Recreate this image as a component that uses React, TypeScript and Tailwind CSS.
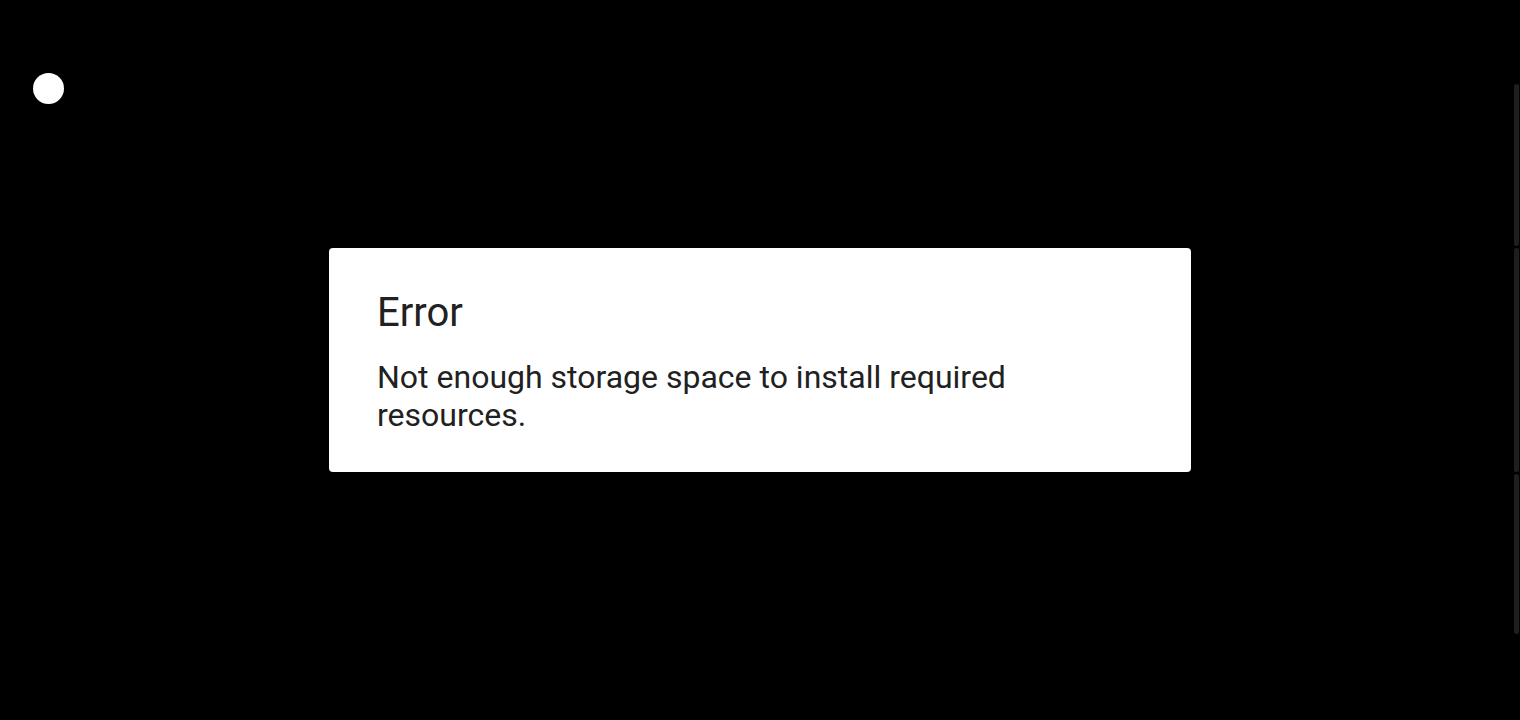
import React from "react";

const ScrollSegments: React.FC = () => (
  <div className="absolute right-px top-[84px] flex flex-col gap-[2px]">
    <div className="w-[5px] h-[162px] rounded-full bg-[#1e1e1e]" />
    <div className="w-[5px] h-[224px] rounded-full bg-[#1e1e1e]" />
    <div className="w-[5px] h-[160px] rounded-full bg-[#1e1e1e]" />
  </div>
);

const App: React.FC = () => {
  return (
    <div className="relative w-full h-[720px] bg-black overflow-hidden flex items-center justify-center font-['Roboto',sans-serif]">
      <div className="absolute left-[33px] top-[73px] size-[31px] rounded-full bg-white" />
      <ScrollSegments />

      <div className="w-[862px] h-[224px] bg-white rounded-[4px] px-12 pt-[41px] text-[#212121]">
        <h2 className="text-[40px] leading-[48px]">Error</h2>
        <p className="mt-[21px] text-[32px] leading-[38px] w-[700px]">
          Not enough storage space to install required resources.
        </p>
      </div>
    </div>
  );
};

export default App;
